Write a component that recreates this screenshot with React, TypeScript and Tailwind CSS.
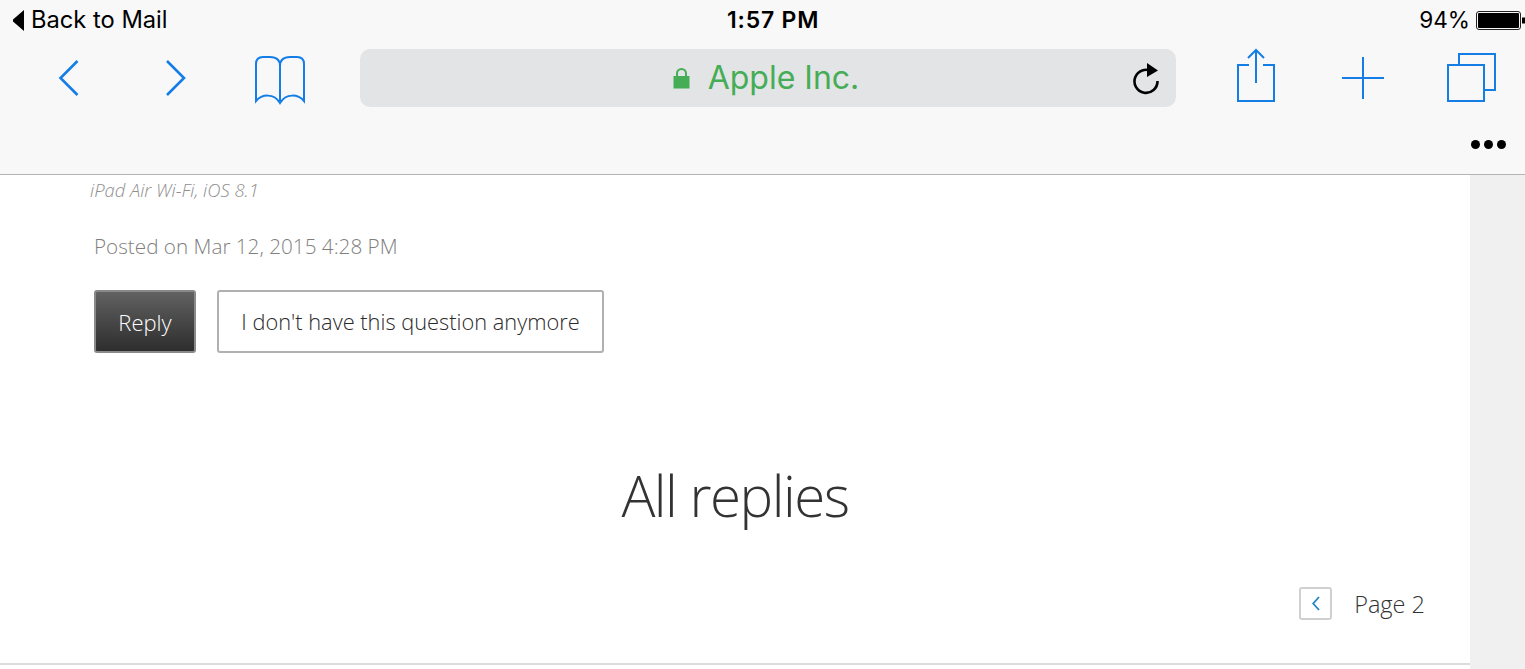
export default function App() {
  return (
    <div className="w-[1525px] h-[669px] overflow-hidden flex flex-col bg-[#f0f0f0]" style={{ fontFamily: "Inter, 'Liberation Sans', sans-serif" }}>
      <header className="h-[175px] shrink-0 bg-[#f8f8f9] border-b border-[#b4b4b4] flex flex-col">
        <div className="h-[49px] relative flex items-start justify-between text-black text-[23px] leading-[40px]">
          <div className="flex items-center ml-[12px]">
            <svg width="12" height="21" viewBox="0 0 12 21" className="mr-[7px]"><path d="M12 0V21L1 11.5V9.5Z" fill="#000" /></svg>
            <span className="text-[23.7px]">Back to Mail</span>
          </div>
          <span className="absolute left-[727px] top-0 font-semibold text-[23px] tracking-[0.8px]">1:57 PM</span>
          <div className="flex items-center">
            <span className="mr-[6px] text-[22.6px]">94%</span>
            <svg width="49" height="20" viewBox="0 0 49 20" className="mt-[1px]">
              <rect x="0.5" y="0.5" width="44" height="18" rx="2.5" fill="none" stroke="#222" />
              <rect x="2" y="2" width="41" height="15" rx="1" fill="#000" />
              <path d="M46 6.5h3v6h-3z" fill="#000" />
            </svg>
          </div>
        </div>
        <div className="h-[58px] flex items-center text-[#157ee6]">
          <svg width="22" height="38" viewBox="0 0 22 38" fill="none" stroke="currentColor" strokeWidth="2.6" className="ml-[58px]"><path d="M19.5 2L2.5 19L19.5 36" /></svg>
          <svg width="22" height="38" viewBox="0 0 22 38" fill="none" stroke="currentColor" strokeWidth="2.6" className="ml-[84px]"><path d="M3 2L20 19L3 36" /></svg>
          <svg width="52" height="54" viewBox="0 0 52 54" fill="none" stroke="currentColor" strokeWidth="2" className="ml-[68px]">
            <path d="M26 15C26 9 22 6 16 6H9C4 6 2 9 2 13V50C8 43 20 42 26 52C32 42 44 43 50 50V13C50 9 48 6 43 6H36C30 6 26 9 26 15V52" />
          </svg>
          <div className="ml-[54px] w-[816px] h-[58px] rounded-[10px] bg-[#e3e4e6] relative flex items-center justify-center">
            <div className="flex items-center ml-[-4px] text-[#45ad55]">
              <svg width="17" height="22" viewBox="0 0 17 22" className="mr-[18px]">
                <path d="M4 10V6.5a4.5 4.5 0 0 1 9 0V10" fill="none" stroke="currentColor" strokeWidth="2" />
                <rect x="0.5" y="9" width="16" height="12.5" fill="currentColor" />
              </svg>
              <span className="text-[32px] leading-none">Apple Inc.</span>
            </div>
            <svg width="28" height="32" viewBox="0 0 28 32" fill="none" className="absolute right-[16px] top-[14px] text-black">
              <path d="M20 8.5A11.5 11.5 0 1 0 25.5 18" stroke="currentColor" strokeWidth="2.6" />
              <path d="M15 0L26 7.5L15 14Z" fill="currentColor" />
            </svg>
          </div>
          <svg width="40" height="54" viewBox="0 0 40 54" fill="none" stroke="currentColor" strokeWidth="2" className="ml-[60px] mb-[6px]">
            <path d="M13 17H2V53H38V17H27" />
            <path d="M20 35V2M12 10L20 2L28 10" />
          </svg>
          <svg width="42" height="42" viewBox="0 0 42 42" fill="none" stroke="currentColor" strokeWidth="2" className="ml-[66px]"><path d="M21 0V42M0 21H42" /></svg>
          <svg width="50" height="50" viewBox="0 0 50 50" fill="none" stroke="currentColor" strokeWidth="2" className="ml-[62px]">
            <path d="M13 12V1H49V37H38" />
            <rect x="2" y="12" width="36" height="36" />
          </svg>
        </div>
        <div className="flex justify-end items-center gap-[4px] pr-[19px] mt-[33px]">
          <span className="w-[9px] h-[9px] rounded-full bg-black" />
          <span className="w-[9px] h-[9px] rounded-full bg-black" />
          <span className="w-[9px] h-[9px] rounded-full bg-black" />
        </div>
      </header>
      <main className="w-[1470px] flex-1 bg-white" style={{ fontFamily: "'Open Sans', 'Liberation Sans', sans-serif" }}>
        <p className="pl-[90px] pt-[3px] italic font-light text-[18.4px] leading-[24px] text-[#8e8e8e]">iPad Air Wi-Fi, iOS 8.1</p>
        <p className="pl-[94px] mt-[30px] font-light text-[20.7px] leading-[28px] text-[#7f7f7f]">Posted on Mar 12, 2015 4:28 PM</p>
        <div className="flex gap-[21px] pl-[94px] mt-[30px]">
          <button className="w-[102px] h-[63px] pt-[2px] rounded-[3px] border-2 border-[#8a8a8a] bg-gradient-to-b from-[#626262] to-[#2e2e2e] text-white font-light text-[22px]">Reply</button>
          <button className="w-[387px] h-[63px] pt-[2px] rounded-[3px] border-2 border-[#b0b0b0] bg-white text-[#2a2a2a] font-light text-[21.8px]">I don't have this question anymore</button>
        </div>
        <h2 className="mt-[103px] text-center font-light text-[56.5px] leading-[80px] tracking-[-1.5px] text-[#333333]">All replies</h2>
        <div className="flex justify-end items-start pr-[45px] mt-[51px]">
          <div className="w-[33px] h-[33px] rounded-[3px] border-2 border-[#d0d0d0] flex items-center justify-center">
            <svg width="8" height="15" viewBox="0 0 8 15" fill="none" stroke="#1f86c4" strokeWidth="1.8"><path d="M7 1L1.2 7.5L7 14" /></svg>
          </div>
          <span className="ml-[22px] mt-[1px] font-light text-[23.5px] leading-[33px] text-[#333333]">Page 2</span>
        </div>
        <div className="mt-[42px] h-[2px] bg-[#dcdcdc]" />
      </main>
    </div>
  );
}
